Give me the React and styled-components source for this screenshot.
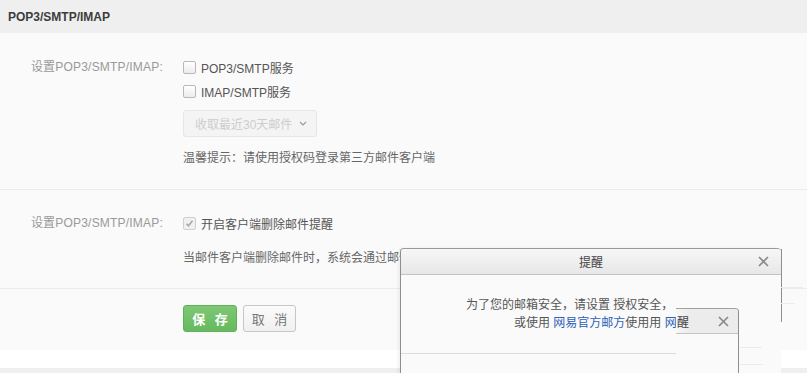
import React from "react";
import styled, { createGlobalStyle } from "styled-components";

const GlobalStyle = createGlobalStyle`
  html, body {
    margin: 0;
    padding: 0;
    background: #efefef;
  }
  body {
    font-family: "Liberation Sans", "Noto Sans CJK SC", sans-serif;
    font-size: 12px;
    color: #555;
    overflow: hidden;
  }
`;

function CloseIcon() {
    return (
        <svg width="11" height="11" viewBox="0 0 11 11">
            <path d="M1 1l9 9M10 1l-9 9" stroke="#8a8a8a" strokeWidth="1.7" />
        </svg>
    );
}

function App() {
    return (
        <>
            <GlobalStyle />
            <Page>
                <Header>POP3/SMTP/IMAP</Header>
                <Body>
                    <Section>
                        <Row>
                            <Label>设置POP3/SMTP/IMAP:</Label>
                            <Field>
                                <Option><Check />POP3/SMTP服务</Option>
                                <Option><Check />IMAP/SMTP服务</Option>
                                <Select>
                                    收取最近30天邮件
                                    <Chevron viewBox="0 0 8 5">
                                        <path d="M1 1l3 3 3-3" fill="none" stroke="#999" strokeWidth="1.1" />
                                    </Chevron>
                                </Select>
                                <Tip>温馨提示：请使用授权码登录第三方邮件客户端</Tip>
                            </Field>
                        </Row>
                    </Section>
                    <Section second>
                        <Row>
                            <Label>设置POP3/SMTP/IMAP:</Label>
                            <Field>
                                <Option>
                                    <Check checked>
                                        <svg width="9" height="9" viewBox="0 0 9 9">
                                            <path d="M1.5 4.8l2 2 4-5" fill="none" stroke="#a9a9a9" strokeWidth="1.6" />
                                        </svg>
                                    </Check>
                                    开启客户端删除邮件提醒
                                </Option>
                                <Desc>当邮件客户端删除邮件时，系统会通过邮件提醒您，以免误删邮件</Desc>
                            </Field>
                        </Row>
                    </Section>
                    <Actions>
                        <Button primary>保 存</Button>
                        <Button>取 消</Button>
                    </Actions>
                </Body>
                <Strip />
            </Page>

            <Dialog>
                <DialogHead>
                    <DialogTitle>提醒</DialogTitle>
                    <Close><CloseIcon /></Close>
                </DialogHead>
                <DialogBody>
                    <Line>为了您的邮箱安全，请设置 授权安全，</Line>
                    <Line indent>或使用 <A>网易官方邮方</A>使用用 <A>网</A></Line>
                </DialogBody>
                <Rule />
            </Dialog>

            <GhostDialog>
                <GhostHead>
                    <span>醒</span>
                    <Close small><CloseIcon /></Close>
                </GhostHead>
            </GhostDialog>

            <Trace top={287} left={781} width={22} />
            <Trace top={303} left={781} width={14} />
            <Trace top={347} left={740} width={22} />
            <Trace top={364} left={740} width={23} />
        </>
    );
}
export default App;

const Page = styled.div`
    width: 807px;
    height: 373px;
`;
const Header = styled.div`
    height: 33px;
    line-height: 34px;
    padding-left: 8px;
    background: #efefef;
    font-weight: 700;
    font-size: 12px;
    color: #3c3c3c;
`;
const Body = styled.div`
    background: #fafafa;
`;
const Section = styled.div`
    border-bottom: 1px solid #ececec;
    padding: ${(p) => (p.second ? "21px 0 18px" : "22px 0 21px")};
`;
const Row = styled.div`
    display: grid;
    grid-template-columns: 163px 1fr;
    column-gap: 20px;
`;
const Label = styled.div`
    text-align: right;
    line-height: 24px;
    color: #999;
    letter-spacing: 0.2px;
`;
const Field = styled.div`
    display: flex;
    flex-direction: column;
    align-items: flex-start;
`;
const Option = styled.label`
    display: flex;
    align-items: center;
    gap: 5px;
    height: 24px;
    color: #555;
`;
const Check = styled.span`
    width: 11px;
    height: 11px;
    border: 1px solid ${(p) => (p.checked ? "#d0d0d0" : "#b8b8b8")};
    border-radius: 2px;
    background: ${(p) => (p.checked ? "#f0f0f0" : "linear-gradient(#ffffff, #ececec)")};
    display: flex;
    align-items: center;
    justify-content: center;
`;
const Select = styled.div`
    margin-top: 7px;
    height: 25px;
    width: 121px;
    padding-left: 11px;
    border: 1px solid #e6e6e6;
    border-radius: 3px;
    background: #f4f4f4;
    color: #cdcdcd;
    display: flex;
    align-items: center;
    gap: 7px;
`;
const Chevron = styled.svg`
    width: 8px;
    height: 5px;
`;
const Tip = styled.div`
    margin-top: 11px;
    line-height: 20px;
    color: #666;
`;
const Desc = styled.div`
    margin-top: 11px;
    line-height: 24px;
    color: #666;
    white-space: nowrap;
`;
const Actions = styled.div`
    display: flex;
    gap: 6px;
    padding: 16px 0 18px 183px;
`;
const Button = styled.button`
    height: 27px;
    width: ${(p) => (p.primary ? "54px" : "53px")};
    border-radius: 3px;
    font-family: inherit;
    font-size: 13px;
    font-weight: ${(p) => (p.primary ? 700 : 400)};
    letter-spacing: 3px;
    padding: 0 0 0 3px;
    color: ${(p) => (p.primary ? "#fff" : "#777")};
    border: 1px solid ${(p) => (p.primary ? "#63b05c" : "#c6c6c6")};
    background: ${(p) => (p.primary ? "linear-gradient(#7ec874, #66b95e)" : "linear-gradient(#fbfbfb, #f0f0f0)")};
`;
const Strip = styled.div`
    height: 18px;
    background: #fff;
`;

const Dialog = styled.div`
    position: absolute;
    left: 400px;
    top: 248px;
    width: 380px;
    height: 140px;
    border-left: 1px solid #8e8e8e;
    border-top: 1px solid #9a9a9a;
    border-top-left-radius: 4px;
    border-top-right-radius: 4px;
    background: #fafafa;
    box-shadow: -2px 0 3px rgba(0, 0, 0, 0.06);

    &::after {
        content: "";
        position: absolute;
        right: -1px;
        top: 0;
        width: 1px;
        height: 73px;
        background: #8e8e8e;
    }
`;
const DialogHead = styled.div`
    height: 25px;
    border-bottom: 1px solid #c4c4c4;
    background: linear-gradient(#f7f7f7, #e7e7e7);
    border-top-left-radius: 4px;
    border-top-right-radius: 4px;
    position: relative;
    display: flex;
    align-items: center;
    justify-content: center;
`;
const DialogTitle = styled.span`
    font-size: 12px;
    color: #444;
`;
const Close = styled.span`
    position: absolute;
    right: ${(p) => (p.small ? "9px" : "12px")};
    top: 7px;
    display: flex;
`;
const DialogBody = styled.div`
    padding-top: 21px;
    height: 54px;
    box-sizing: border-box;
`;
const Line = styled.div`
    line-height: 18px;
    color: #555;
    padding-left: ${(p) => (p.indent ? "113px" : "65px")};
    white-space: nowrap;
`;
const A = styled.span`
    color: #2c5fb8;
`;
const Rule = styled.div`
    margin-top: 24px;
    width: 335px;
    height: 1px;
    background: #dcdcdc;
`;

const GhostDialog = styled.div`
    position: absolute;
    left: 676px;
    top: 308px;
    width: 62px;
    height: 80px;
    border-top: 1px solid #a0a0a0;
    border-right: 1px solid #8e8e8e;
    border-top-right-radius: 4px;
    background: #fafafa;
`;
const GhostHead = styled.div`
    height: 24px;
    padding-left: 1px;
    border-bottom: 1px solid #c4c4c4;
    background: linear-gradient(90deg, rgba(240, 240, 240, 0.2), #ececec 20%);
    border-top-right-radius: 4px;
    position: relative;
    display: flex;
    align-items: center;
    color: #444;
`;
const Trace = styled.div`
    position: absolute;
    top: ${(p) => p.top}px;
    left: ${(p) => p.left}px;
    width: ${(p) => p.width}px;
    height: 1px;
    background: #ececec;
`;
